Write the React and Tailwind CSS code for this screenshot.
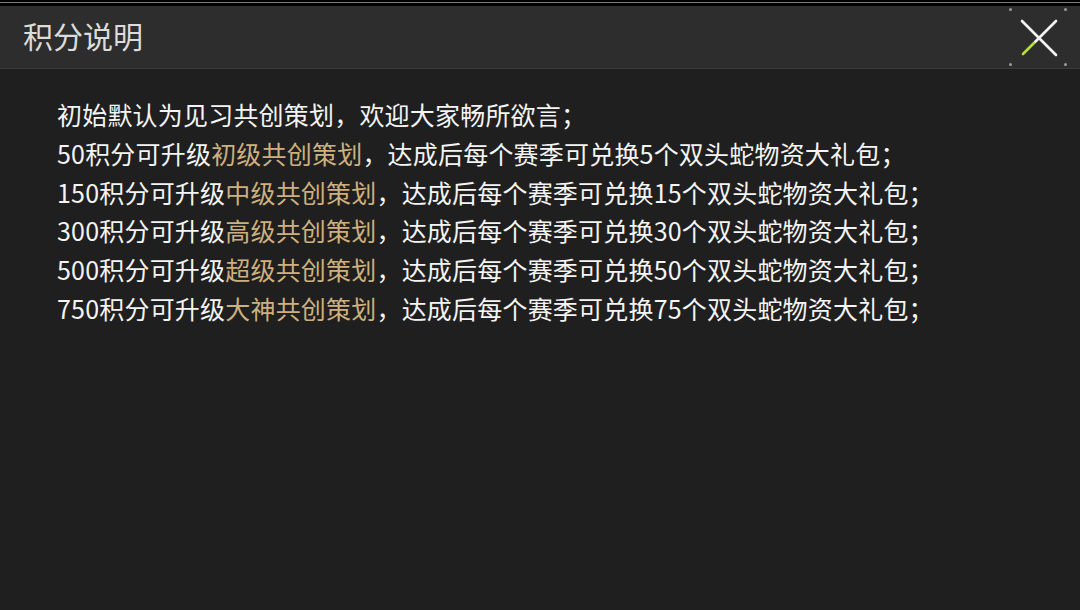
import React from 'react';

const rules = [
  { pts: '50', level: '初级共创策划', n: '5' },
  { pts: '150', level: '中级共创策划', n: '15' },
  { pts: '300', level: '高级共创策划', n: '30' },
  { pts: '500', level: '超级共创策划', n: '50' },
  { pts: '750', level: '大神共创策划', n: '75' },
];

// close button with the little corner dots
const CloseButton = () => (
  <div className="relative w-[58px] h-[58px] flex items-center justify-center">
    <span className="absolute left-0 top-0 w-[3px] h-[3px] rounded-full bg-[#9a9a9a]" />
    <span className="absolute right-0 top-0 w-[3px] h-[3px] rounded-full bg-[#9a9a9a]" />
    <span className="absolute left-0 bottom-0 w-[3px] h-[3px] rounded-full bg-[#9a9a9a]" />
    <span className="absolute right-0 bottom-0 w-[3px] h-[3px] rounded-full bg-[#9a9a9a]" />
    <svg width="58" height="58" viewBox="0 0 58 58">
      <line x1="13" y1="13" x2="47" y2="47" stroke="#f2f2f2" strokeWidth="2.6" strokeLinecap="round" />
      <line x1="47" y1="13" x2="26" y2="34" stroke="#f2f2f2" strokeWidth="2.6" strokeLinecap="round" />
      <line x1="25" y1="35" x2="14" y2="46" stroke="#b5e03a" strokeWidth="2.6" strokeLinecap="round" />
    </svg>
  </div>
);

export default function App() {
  return (
    <div
      className="w-[1080px] h-[610px] bg-[#1f1f1f] flex flex-col overflow-hidden"
      style={{ fontFamily: '"Noto Sans CJK SC", "Noto Sans", sans-serif' }}
    >
      {/* top strip */}
      <div className="h-[6px] bg-black flex flex-col">
        <div className="h-[2px]" />
        <div className="h-[1px] bg-[#7a7a7a]" />
      </div>

      {/* header */}
      <div className="h-[63px] bg-[#2d2d2d] border-b border-[#3a3a3a] flex items-center justify-between pl-[23px] pr-[13px]">
        <h1 className="text-[30px] leading-none text-[#dcdcdc] -mt-[4px]">积分说明</h1>
        <CloseButton />
      </div>

      {/* body */}
      <div className="flex-1 pt-[26px] pl-[57px] text-[25px] leading-[38.8px] tracking-[0.2px] text-[#f4f4f4]">
        <p>初始默认为见习共创策划，欢迎大家畅所欲言；</p>
        {rules.map((r) => (
          <p key={r.pts}>
            {r.pts}积分可升级<span className="text-[#cdb07e]">{r.level}</span>，达成后每个赛季可兑换{r.n}个双头蛇物资大礼包；
          </p>
        ))}
      </div>
    </div>
  );
}
